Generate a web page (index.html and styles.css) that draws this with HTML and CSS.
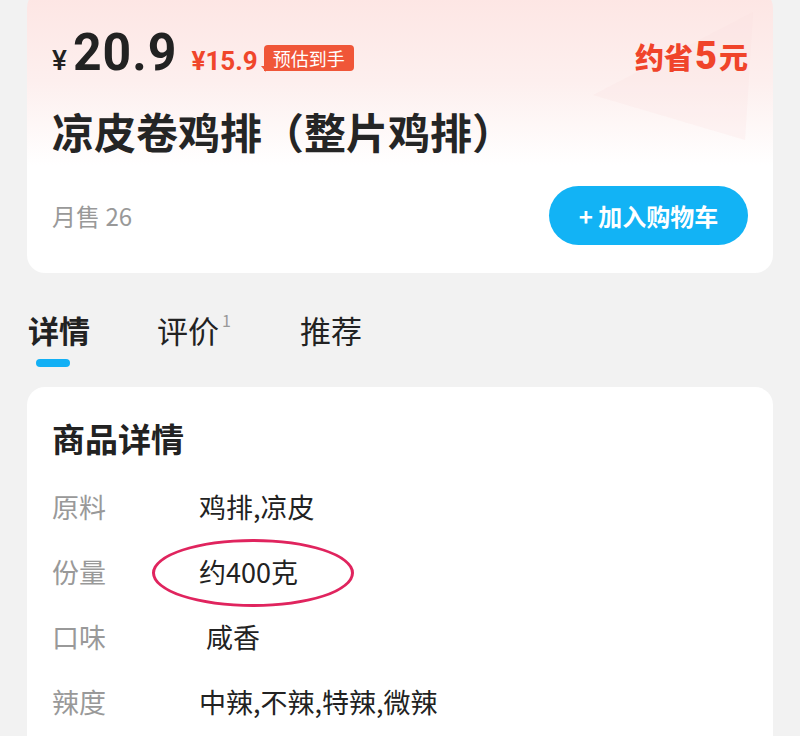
FILE: index.html
```html
<!DOCTYPE html>
<html lang="zh-CN">

<head>
    <meta charset="UTF-8">
    <meta name="viewport" content="width=device-width, initial-scale=1.0">
    <title>凉皮卷鸡排</title>
    <link rel="stylesheet" href="styles.css">
</head>

<body>
    <div class="page">
        <!-- 商品信息卡片 -->
        <div class="goods-card">
            <svg class="card-deco" width="200" height="180" viewBox="0 0 200 180">
                <polygon points="20,105 180,22 172,150" fill="#fbdede" opacity="0.25" />
            </svg>
            <div class="price-row">
                <div class="price-left">
                    <span class="yen">¥</span>
                    <span class="price">20.9</span>
                    <span class="price-after">¥15.9</span>
                    <span class="tag">预估到手</span>
                </div>
                <div class="save">约省<span class="save-num">5</span>元</div>
            </div>
            <h1 class="goods-name">凉皮卷鸡排（整片鸡排）</h1>
            <div class="goods-bottom">
                <span class="sales">月售 26</span>
                <button type="button" class="cart-btn">+ 加入购物车</button>
            </div>
        </div>

        <!-- 标签页 -->
        <div class="tabs">
            <div class="tab active">详情</div>
            <div class="tab">评价<sup>1</sup></div>
            <div class="tab">推荐</div>
        </div>

        <!-- 商品详情 -->
        <div class="detail-card">
            <h2 class="detail-title">商品详情</h2>
            <div class="detail-row">
                <span class="label">原料</span>
                <span class="value">鸡排,凉皮</span>
            </div>
            <div class="detail-row">
                <span class="label">份量</span>
                <span class="value">约400克</span>
                <span class="circle"></span>
            </div>
            <div class="detail-row">
                <span class="label">口味</span>
                <span class="value shift">咸香</span>
            </div>
            <div class="detail-row">
                <span class="label">辣度</span>
                <span class="value">中辣,不辣,特辣,微辣</span>
            </div>
        </div>
    </div>
</body>

</html>
```

FILE: styles.css
```css
body {
    margin: 0;
    background-color: #f2f2f2;
    font-family: "Noto Sans CJK SC", "Noto Sans", sans-serif;
    color: #222;
}

.page {
    padding: 0 27px;
}

/* 商品卡片 */
.goods-card {
    position: relative;
    overflow: hidden;
    margin-top: -10px;
    height: 283px;
    box-sizing: border-box;
    padding: 32px 25px 0 25px;
    border-radius: 18px;
    background: linear-gradient(180deg, #fde5e3 0%, #fdefee 32%, #ffffff 62%, #ffffff 100%);
}

.card-deco {
    position: absolute;
    right: 0;
    top: 0;
}

.price-row {
    position: relative;
    display: flex;
    justify-content: space-between;
    align-items: flex-start;
}

.price-left {
    display: flex;
    align-items: baseline;
}

.yen {
    font-family: Roboto, sans-serif;
    font-size: 28px;
    font-weight: 500;
    margin-right: 6px;
}

.price {
    font-family: Roboto, sans-serif;
    font-size: 52px;
    font-weight: 700;
    letter-spacing: 1px;
    transform: scaleX(0.96);
    transform-origin: left;
    margin-right: 10px;
}

.price-after {
    font-family: Roboto, sans-serif;
    font-size: 26px;
    font-weight: 700;
    color: #f0462b;
    margin-right: 6px;
}

.tag {
    position: relative;
    align-self: flex-start;
    margin-top: 23px;
    padding: 0 9px;
    height: 26px;
    line-height: 26px;
    font-size: 18px;
    color: #fff;
    background-color: #f05638;
    border-radius: 4px 4px 4px 0;
}

.tag::after {
    content: "";
    position: absolute;
    left: -3px;
    bottom: -1px;
    border-left: 5px solid transparent;
    border-top: 6px solid #f05638;
}

.save {
    margin-top: 16px;
    font-size: 29px;
    line-height: 36px;
    font-weight: 900;
    color: #f0442a;
}

.save-num {
    font-family: Roboto, sans-serif;
    font-size: 38px;
    margin: 0 2px;
}

.goods-name {
    position: relative;
    margin: 20px 0 0 0;
    font-size: 42px;
    line-height: 56px;
    font-weight: 700;
    color: #252525;
}

.goods-bottom {
    position: relative;
    display: flex;
    justify-content: space-between;
    align-items: center;
    margin-top: 27px;
}

.sales {
    font-size: 24px;
    color: #999;
}

.cart-btn {
    width: 199px;
    height: 59px;
    border: none;
    border-radius: 30px;
    background-color: #12b3f5;
    color: #fff;
    font-family: "Noto Sans CJK SC", sans-serif;
    font-size: 24px;
    font-weight: 700;
}

/* 标签页 */
.tabs {
    display: flex;
    gap: 67px;
    padding: 35px 0 0 1px;
    height: 79px;
}

.tab {
    position: relative;
    font-size: 31px;
    line-height: 44px;
    color: #222;
    height: 44px;
}

.tab sup {
    position: absolute;
    top: -10px;
    right: -12px;
    font-size: 16px;
    color: #999;
    font-weight: 400;
}

.tab:nth-child(2) {
    margin-right: 14px;
}

.tab.active {
    font-weight: 700;
}

.tab.active::after {
    content: "";
    position: absolute;
    left: 8px;
    top: 51px;
    width: 34px;
    height: 8px;
    border-radius: 4px;
    background-color: #12b0f5;
}

/* 商品详情 */
.detail-card {
    background-color: #fff;
    border-radius: 18px;
    padding: 28px 25px 20px 25px;
    min-height: 400px;
}

.detail-title {
    margin: 0 0 13px 0;
    font-size: 33px;
    line-height: 46px;
    font-weight: 700;
}

.detail-row {
    position: relative;
    display: flex;
    align-items: center;
    height: 65px;
    font-size: 27px;
}

.label {
    width: 147px;
    color: #999;
}

.value {
    color: #222;
}

.value.shift {
    margin-left: 7px;
}

.circle {
    position: absolute;
    left: 100px;
    top: 0;
    width: 196px;
    height: 62px;
    border: 3px solid #e0245e;
    border-radius: 50%;
}
```
